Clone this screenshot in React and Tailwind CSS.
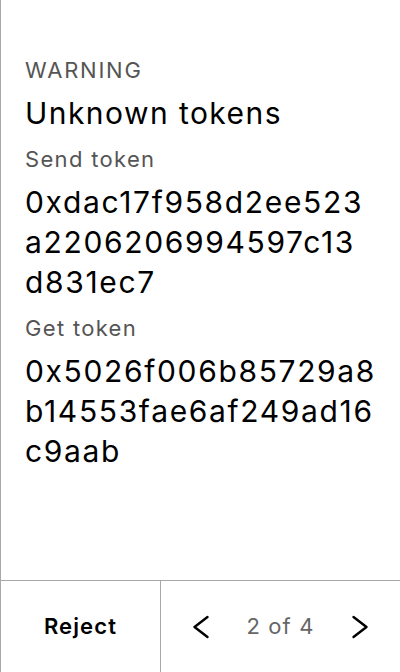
import React from "react";

function Chevron({ dir }) {
  return (
    <svg width="20" height="26" viewBox="0 0 20 26" fill="none">
      {dir === "left" ? (
        <polyline points="16.5,3 3.5,13 16.5,23" stroke="#000" strokeWidth="2.4" strokeLinecap="round" strokeLinejoin="round" />
      ) : (
        <polyline points="3.5,3 16.5,13 3.5,23" stroke="#000" strokeWidth="2.4" strokeLinecap="round" strokeLinejoin="round" />
      )}
    </svg>
  );
}

function Hex({ lines, className = "" }) {
  return (
    <div className={"text-[30px] leading-[40px] tracking-[0.055em] text-black " + className}>
      {lines.map((l) => (
        <span key={l} className="block whitespace-nowrap">
          {l}
        </span>
      ))}
    </div>
  );
}

export default function App() {
  return (
    <div
      className="w-[400px] h-[672px] flex flex-col bg-white border-l border-[#a8a8a8] overflow-hidden"
      style={{ fontFamily: "Inter, 'Noto Sans', sans-serif" }}
    >
      <div className="flex-1 pl-6 pr-6 pt-[56px]">
        <div className="text-[22px] leading-[28px] tracking-[0.08em] text-[#555] mb-[9px]">WARNING</div>
        <div className="text-[30px] leading-[40px] tracking-[0.048em] text-black mb-3">Unknown tokens</div>
        <div className="text-[22px] leading-[28px] tracking-[0.06em] text-[#555] mb-[9px]">Send token</div>
        <Hex className="mb-3" lines={["0xdac17f958d2ee523", "a2206206994597c13", "d831ec7"]} />
        <div className="text-[22px] leading-[28px] tracking-[0.06em] text-[#555] mb-[9px]">Get token</div>
        <Hex lines={["0x5026f006b85729a8", "b14553fae6af249ad16", "c9aab"]} />
      </div>
      <div className="h-[92px] flex border-t border-[#a8a8a8] tracking-[0.07em]">
        <div className="w-[160px] flex items-center justify-center border-r border-[#a8a8a8]">
          <span className="text-[22px] font-semibold text-black">Reject</span>
        </div>
        <div className="flex-1 flex items-center justify-between px-4">
          <button className="w-12 h-12 flex items-center justify-center">
            <Chevron dir="left" />
          </button>
          <span className="text-[22px] text-[#666]">2 of 4</span>
          <button className="w-12 h-12 flex items-center justify-center">
            <Chevron dir="right" />
          </button>
        </div>
      </div>
    </div>
  );
}
